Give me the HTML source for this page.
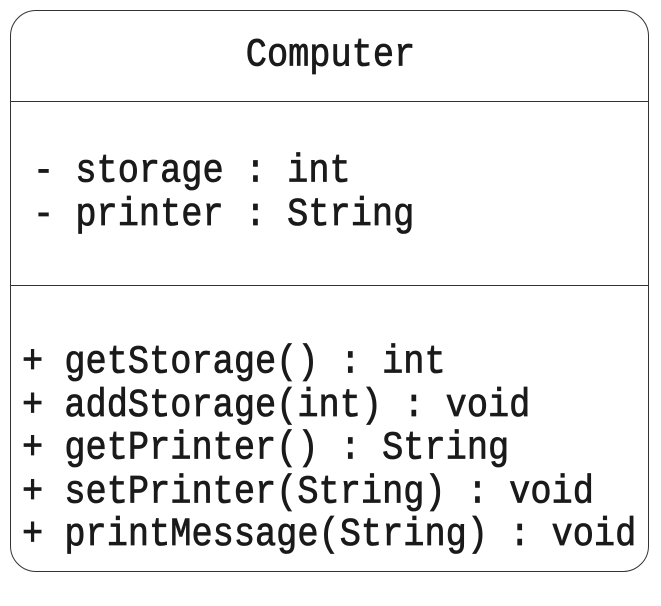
<!DOCTYPE html>
<html><head><style>
body{margin:0;width:661px;height:606px;background:#fff;position:relative;overflow:hidden;font-family:"Liberation Mono",monospace;color:#1a1a1a}
.box{position:absolute;left:10px;top:10px;width:639px;height:562px;border:1.5px solid #333;border-radius:26px;box-sizing:border-box}
.hl{position:absolute;left:11px;width:638px;height:0;border-top:1.5px solid #333}
.t{position:absolute;font-size:35.3px;line-height:38.5px;white-space:pre;-webkit-text-stroke:0.7px #1a1a1a;transform:scaleY(1.12);transform-origin:0 0}
</style></head><body>
<div class="box"></div>
<div class="hl" style="top:101px"></div>
<div class="hl" style="top:285px"></div>
<div class="t" style="left:0;width:661px;text-align:center;top:34px;">Computer</div>
<div class="t" style="left:33px;top:150px;">- storage : int
- printer : String</div>
<div class="t" style="left:22px;top:341px;">+ getStorage() : int
+ addStorage(int) : void
+ getPrinter() : String
+ setPrinter(String) : void
+ printMessage(String) : void</div>
</body></html>
